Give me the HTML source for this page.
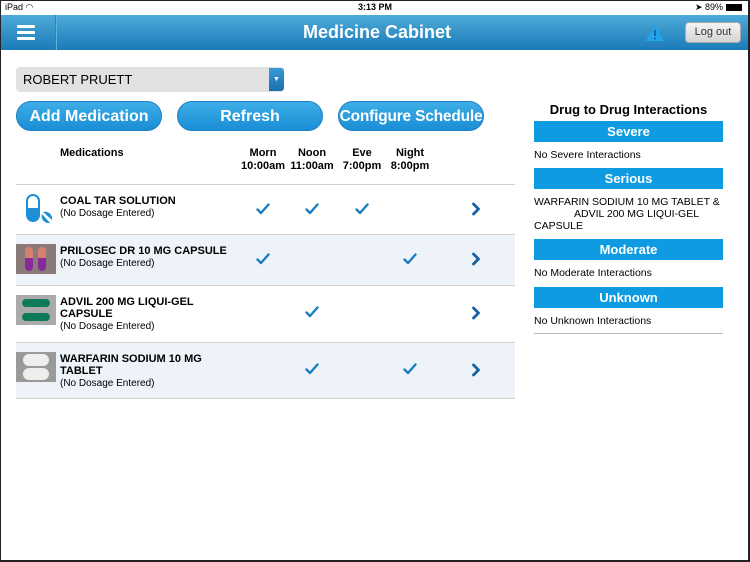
<!DOCTYPE html>
<html><head><style>
*{margin:0;padding:0;box-sizing:border-box}
body{width:750px;height:562px;position:relative;font-family:"Liberation Sans",Arial,sans-serif;background:#fff;overflow:hidden;color:#000}
.frame{position:absolute;left:0;top:0;width:750px;height:562px;border:1px solid #222;border-width:1px 2px 2px 1px;pointer-events:none;z-index:9}
.abs{position:absolute}
.hdr{left:0;top:15px;width:750px;height:35px;background:linear-gradient(#4eaad9,#1b7bb8)}
.btn{position:absolute;top:101px;height:30px;border-radius:15px;background:linear-gradient(#3eaee8,#1a8dd6);border:1px solid #1a7fc0;color:#fff;font-weight:bold;font-size:16px;text-align:center;line-height:30px}
.colh{position:absolute;top:147px;width:60px;text-align:center;font-size:11px;font-weight:bold;line-height:13px}
.row{position:absolute;left:16px;width:499px;border-bottom:1px solid #d0d0d0}
.name{position:absolute;left:60px;font-size:11px;font-weight:bold;line-height:12px}
.sub{font-weight:normal;font-size:10px}
.ck{position:absolute;width:14px;height:12px}
.chev{position:absolute;left:455px;width:10px;height:14px}
.bar{position:absolute;left:534px;width:189px;height:21px;background:#0f9be1;color:#fff;font-weight:bold;font-size:13px;text-align:center;line-height:21px}
.it{position:absolute;left:534px;font-size:10.5px;line-height:12px}
</style></head><body>
<svg width="0" height="0" style="position:absolute"><defs>
<symbol id="c" viewBox="0 0 14 12"><path d="M1.5 6.5L5 10L12.5 1.5" fill="none" stroke="#1a7fc0" stroke-width="2.4" stroke-linecap="round" stroke-linejoin="round"/></symbol>
<symbol id="v" viewBox="0 0 10 14"><path d="M2.5 2L7.5 7L2.5 12" fill="none" stroke="#1a5fa0" stroke-width="2.8" stroke-linecap="round" stroke-linejoin="round"/></symbol>
</defs></svg>
<div class="frame"></div>
<div class="abs" style="left:5px;top:2px;font-size:9px">iPad <span style="font-size:9px">&#x25E0;</span></div>
<div class="abs" style="left:0;width:750px;top:2px;font-size:9px;font-weight:bold;text-align:center">3:13 PM</div>
<div class="abs" style="left:695px;top:2px;font-size:9px">&#x27A4; 89% <span style="display:inline-block;width:16px;height:7px;background:#000;vertical-align:-1px"></span></div>
<div class="abs hdr"></div>
<div class="abs" style="left:55px;top:15px;width:1px;height:35px;background:#2a85bd;box-shadow:1px 0 0 #5cb3de"></div>
<div class="abs" style="left:17px;top:25px;width:18px;height:3px;background:#fff;border-radius:1px;box-shadow:0 6px 0 #fff,0 12px 0 #fff"></div>
<div class="abs" style="left:0;width:754px;top:22px;text-align:center;color:#fff;font-weight:bold;font-size:18px">Medicine Cabinet</div>
<svg class="abs" style="left:645px;top:24px" width="20" height="18"><path d="M10 1L19 17H1Z" fill="#22a4ec"/><rect x="9" y="6" width="2" height="6" fill="#1669a3"/><rect x="9" y="13.5" width="2" height="2" fill="#1669a3"/></svg>
<div class="abs" style="left:685px;top:22px;width:56px;height:21px;border-radius:4px;background:linear-gradient(#f4f4f4,#d4d4d4);border:1px solid #aaa;font-size:11px;color:#333;text-align:center;line-height:19px">Log out</div>
<div class="abs" style="left:16px;top:67px;width:268px;height:25px;background:#e1e1e1;border-radius:4px;font-size:13px;line-height:25px;padding-left:7px">ROBERT PRUETT</div>
<div class="abs" style="left:269px;top:68px;width:15px;height:23px;background:linear-gradient(#3a9ad6,#1a6fae);border-radius:0 3px 3px 0;color:#fff;font-size:7px;text-align:center;line-height:23px">&#9660;</div>
<div class="btn" style="left:16px;width:146px">Add Medication</div>
<div class="btn" style="left:177px;width:146px">Refresh</div>
<div class="btn" style="left:338px;width:146px;font-size:15.5px;letter-spacing:-.2px">Configure Schedule</div>
<div class="abs" style="left:60px;top:147px;font-size:11px;font-weight:bold">Medications</div>
<div class="colh" style="left:233px">Morn<br>10:00am</div>
<div class="colh" style="left:282px">Noon<br>11:00am</div>
<div class="colh" style="left:332px">Eve<br>7:00pm</div>
<div class="colh" style="left:380px">Night<br>8:00pm</div>
<div class="abs" style="left:16px;top:184px;width:499px;height:1px;background:#d0d0d0"></div>

<div class="row" style="top:185px;height:50px;background:#fff">
<svg class="abs" style="left:8px;top:8px" width="30" height="34"><rect x="3" y="2" width="12" height="26" rx="6" fill="#fff" stroke="#1e8fd6" stroke-width="2"/><path d="M3 15h12v7a6 6 0 0 1-12 0z" fill="#1e8fd6"/><path d="M19 19a7 7 0 0 1 9 8z" fill="#1e8fd6"/><path d="M18 21l8 9a7 7 0 0 1-8-9z" fill="#1e8fd6"/></svg>
<div class="name" style="top:10px;left:44px">COAL TAR SOLUTION<br><span class="sub">(No Dosage Entered)</span></div>
<svg class="ck" style="left:240px;top:18px"><use href="#c"/></svg><svg class="ck" style="left:289px;top:18px"><use href="#c"/></svg><svg class="ck" style="left:339px;top:18px"><use href="#c"/></svg>
<svg class="chev" style="top:17px"><use href="#v"/></svg></div>

<div class="row" style="top:235px;height:51px;background:#eef3fa">
<div class="abs" style="left:0;top:9px;width:40px;height:30px;background:#8a7a7a"><div class="abs" style="left:9px;top:3px;width:8px;height:24px;border-radius:4px;background:linear-gradient(#d88070 45%,#8a2a9a 45%)"></div><div class="abs" style="left:22px;top:3px;width:8px;height:24px;border-radius:4px;background:linear-gradient(#d88070 45%,#8a2a9a 45%)"></div></div>
<div class="name" style="top:10px;left:44px">PRILOSEC DR 10 MG CAPSULE<br><span class="sub">(No Dosage Entered)</span></div>
<svg class="ck" style="left:240px;top:18px"><use href="#c"/></svg><svg class="ck" style="left:387px;top:18px"><use href="#c"/></svg>
<svg class="chev" style="top:17px"><use href="#v"/></svg></div>

<div class="row" style="top:286px;height:57px;background:#fff">
<div class="abs" style="left:0;top:9px;width:40px;height:30px;background:#aaa"><div class="abs" style="left:6px;top:4px;width:28px;height:8px;border-radius:4px;background:#0f7a5a"></div><div class="abs" style="left:6px;top:18px;width:28px;height:8px;border-radius:4px;background:#0f7a5a"></div></div>
<div class="name" style="top:10px;left:44px">ADVIL 200 MG LIQUI-GEL<br>CAPSULE<br><span class="sub">(No Dosage Entered)</span></div>
<svg class="ck" style="left:289px;top:20px"><use href="#c"/></svg>
<svg class="chev" style="top:20px"><use href="#v"/></svg></div>

<div class="row" style="top:343px;height:56px;background:#eef3fa">
<div class="abs" style="left:0;top:9px;width:40px;height:30px;background:#9a9a9a"><div class="abs" style="left:7px;top:2px;width:26px;height:12px;border-radius:6px;background:#eee"></div><div class="abs" style="left:7px;top:16px;width:26px;height:12px;border-radius:6px;background:#eee"></div></div>
<div class="name" style="top:10px;left:44px">WARFARIN SODIUM 10 MG<br>TABLET<br><span class="sub">(No Dosage Entered)</span></div>
<svg class="ck" style="left:289px;top:20px"><use href="#c"/></svg><svg class="ck" style="left:387px;top:20px"><use href="#c"/></svg>
<svg class="chev" style="top:20px"><use href="#v"/></svg></div>

<div class="abs" style="left:534px;width:189px;top:102px;text-align:center;font-weight:bold;font-size:13px">Drug to Drug Interactions</div>
<div class="bar" style="top:121px">Severe</div>
<div class="it" style="top:149px">No Severe Interactions</div>
<div class="bar" style="top:168px">Serious</div>
<div class="it" style="top:196px">WARFARIN SODIUM 10 MG TABLET &amp;<br><span style="padding-left:40px">ADVIL 200 MG LIQUI-GEL</span><br>CAPSULE</div>
<div class="bar" style="top:239px">Moderate</div>
<div class="it" style="top:267px">No Moderate Interactions</div>
<div class="bar" style="top:287px">Unknown</div>
<div class="it" style="top:315px">No Unknown Interactions</div>
<div class="abs" style="left:534px;top:333px;width:189px;height:1px;background:#bbb"></div>
</body></html>
